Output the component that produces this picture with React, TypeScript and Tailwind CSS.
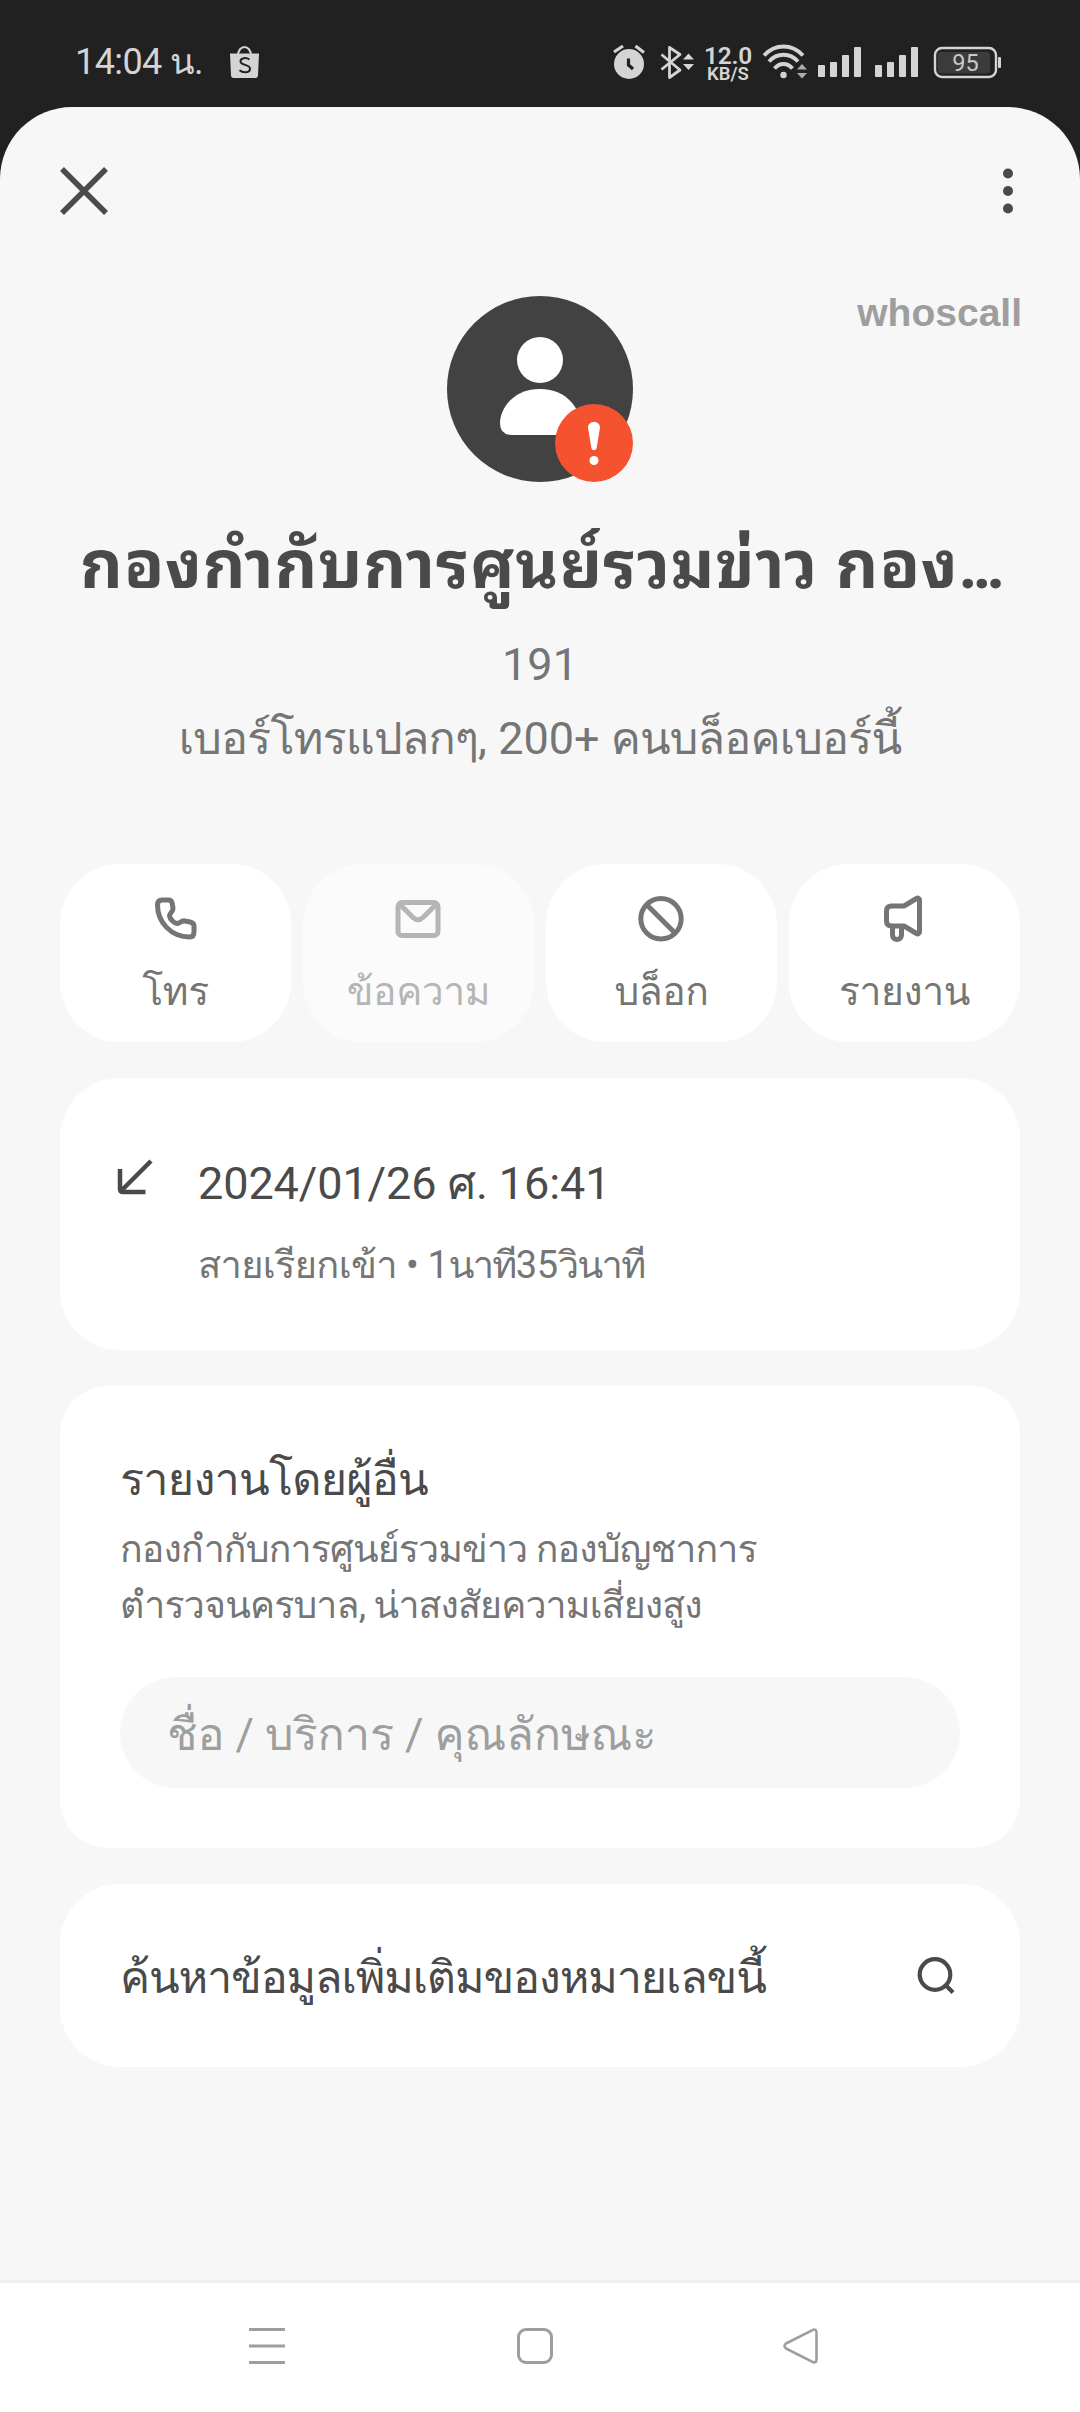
import type { ReactNode } from "react";

function StatusBar() {
  return (
    <div className="flex h-[107px] items-center justify-between bg-[#212121] pt-[17px] pr-[78px] pl-[75px] text-[#d4d4d4]">
      <div className="flex items-center gap-[26px]">
        <span className="text-[36px] leading-[42px] tracking-[-0.6px]">14:04 น.</span>
        <svg width="32" height="36" viewBox="0 0 32 36">
          <path d="M9 12C9 0 22 0 22 12" fill="none" stroke="currentColor" strokeWidth="2" />
          <path d="M1 9.5h29l-1 22q-.2 2.5-2.5 2.5h-22q-2.3 0-2.5-2.5z" fill="currentColor" />
          <path
            d="M20.5 15.5c-3-2.2-9-2-9 1.7 0 4.5 9.5 2.8 9.5 7.5 0 4.3-7 4.5-10.5 1.5"
            fill="none"
            stroke="#212121"
            strokeWidth="2"
          />
        </svg>
      </div>
      <div className="flex items-center">
        <svg width="36" height="40" viewBox="612 42 36 40" fill="none" stroke="currentColor" strokeWidth="3.2">
          <circle cx="629" cy="64" r="15" fill="currentColor" stroke="none" />
          <path d="M614 52l9-6M635.5 46l8.5 6.5" />
          <path d="M628.5 58.5v6.5l4.5 4" stroke="#212121" />
        </svg>
        <svg className="ml-3" width="36" height="40" viewBox="660 42 36 40">
          <path
            d="M661.5 54.5l18.5 15.5-10.5 7.5V47.5L680 54.5 661.5 69.5"
            fill="none"
            stroke="currentColor"
            strokeWidth="2.8"
            strokeLinejoin="round"
          />
          <path d="M683 59.5l5.5-6 5.5 6zM683 64l5.5 6 5.5-6z" fill="currentColor" />
        </svg>
        <div className="ml-[8px] flex w-[48px] flex-col items-center pt-[4px]">
          <span className="text-[24.5px] leading-[19px] font-semibold tracking-[-0.2px]">12.0</span>
          <span className="text-[18.5px] leading-[18px] font-semibold">KB/S</span>
        </div>
        <svg className="ml-[9px]" width="48" height="40" viewBox="761 42 48 40">
          <g fill="none" stroke="currentColor" strokeWidth="3.8">
            <path d="M764 55.5c11-12 28-12 39 0M769 61.5c8-9 21-9 29 0M774.5 68.5c5-6 13-6 18 0" />
          </g>
          <circle cx="783.5" cy="75" r="3.2" fill="currentColor" />
          <path d="M797 69.5l5-5.5 5 5.5zM797 73l5 5.5 5-5.5z" fill="#acacac" />
        </svg>
        <Signal />
        <Signal />
        <svg className="ml-[9px]" width="70" height="40" viewBox="932 42 70 40">
          <rect x="935" y="48" width="61" height="29" rx="7" fill="none" stroke="currentColor" strokeWidth="2.4" />
          <rect x="937.5" y="52" width="52.5" height="21.5" rx="3" fill="#3b3b3b" />
          <rect x="998" y="57" width="3" height="11" rx="1" fill="currentColor" />
          <text x="965.5" y="71" textAnchor="middle" fontSize="23.5" fill="#c8c8c8">
            95
          </text>
        </svg>
      </div>
    </div>
  );
}

function Signal() {
  return (
    <svg className="ml-[9px]" width="48" height="40" viewBox="0 0 48 40" fill="currentColor">
      <rect x="0" y="23" width="7" height="12" rx="1" />
      <rect x="12" y="20" width="7" height="15" rx="1" />
      <rect x="24" y="13" width="7" height="22" rx="1" />
      <rect x="36" y="5" width="7" height="30" rx="1" />
    </svg>
  );
}

function Avatar() {
  return (
    <svg width="186" height="186" viewBox="0 0 186 186">
      <circle cx="93" cy="93" r="93" fill="#424242" />
      <circle cx="93" cy="64" r="23" fill="#fff" />
      <path d="M93 93C65 93 53 114 53 127Q53 139 65 139H121Q133 139 133 127C133 114 121 93 93 93Z" fill="#fff" />
      <circle cx="147" cy="147" r="39" fill="#f55330" />
      <path d="M141 131.5C141 124 153 124 153 131.5L149.7 151.5C149.3 155 144.7 155 144.3 151.5Z" fill="#fff" />
      <circle cx="147" cy="164.5" r="4.5" fill="#fff" />
    </svg>
  );
}

function Action({ label, disabled, children }: { label: string; disabled?: boolean; children: ReactNode }) {
  return (
    <button
      disabled={disabled}
      className="flex h-[178px] flex-col items-center rounded-[60px] bg-white pt-7 text-[#757575] disabled:opacity-50"
    >
      <svg
        width="54"
        height="54"
        viewBox="0 0 54 54"
        fill="none"
        stroke="currentColor"
        strokeWidth="5"
        strokeLinejoin="round"
      >
        {children}
      </svg>
      <span className="mt-[21px] text-[39px] leading-[50px] tracking-[-0.01em]">{label}</span>
    </button>
  );
}

export default function App() {
  return (
    <div className="flex h-[2412px] w-[1080px] flex-col bg-[#212121] font-[Roboto,Loma,'Noto_Sans_Thai',sans-serif] text-[#4a4a4a]">
      <StatusBar />
      <main className="flex flex-1 flex-col rounded-t-[72px] bg-[#f7f7f7] px-[60px]">
        <header className="flex h-[168px] items-center justify-between">
          <svg width="48" height="48" viewBox="0 0 48 48" stroke="currentColor" strokeWidth="5.5">
            <path d="M2 2l44 44M46 2L2 46" />
          </svg>
          <svg className="mr-[7px]" width="10" height="46" viewBox="0 0 10 46" fill="currentColor">
            <circle cx="5" cy="5.5" r="5" />
            <circle cx="5" cy="23" r="5" />
            <circle cx="5" cy="40.5" r="5" />
          </svg>
        </header>

        <div className="grid grid-cols-[1fr_186px_1fr] pt-[21px]">
          <div />
          <Avatar />
          <span className="-mr-0.5 justify-self-end font-['Liberation_Sans',sans-serif] text-[39px] leading-[34px] font-bold text-[#9e9e9e]">
            whoscall
          </span>
        </div>
        <h1 className="mt-[39px] text-center font-[Roboto,'Noto_Sans_Thai_Looped',Loma,sans-serif] text-[66px] leading-[90px] font-bold tracking-[0.014em] whitespace-nowrap">
          กองกำกับการศูนย์รวมข่าว กอง<span className="tracking-[-0.08em]">...</span>
        </h1>
        <p className="mt-[24px] text-center text-[45px] leading-[60px] text-[#757575]">191</p>
        <p className="mt-[14px] text-center text-[45px] leading-[60px] tracking-[-0.019em] whitespace-nowrap text-[#757575]">
          เบอร์โทรแปลกๆ<span className="tracking-normal">, 200+ </span>คนบล็อคเบอร์นี้
        </p>

        <div className="mt-[95px] grid grid-cols-4 gap-3">
          <Action label="โทร">
            <path d="M13 8H19C21.5 8 23 9.5 23.2 11.5L24 16C24.5 20 20 21.5 20.5 24C21 27 25 31 28 31.5C31 32 32 28 36 29L41 30C43.5 30.6 45 32 45 34V40C45 43 43.5 45 40.5 45C22 45 8.5 30 8.5 13C8.5 10 10 8 13 8Z" />
          </Action>
          <Action label="ข้อความ" disabled>
            <rect x="6" y="10.5" width="40" height="33" rx="4" />
            <path d="M7.5 12L21 25.5Q26 30 31 25.5L44.5 12" />
          </Action>
          <Action label="บล็อก">
            <circle cx="26" cy="26.7" r="20.2" />
            <path d="M12 13l28 28" />
          </Action>
          <Action label="รายงาน">
            <path d="M13 14H26L38.5 6.5C40 5.5 41.5 6.5 41.5 8V40C41.5 41.5 40 42.5 38.5 41.5L26 34H13Q8.5 33.5 8.5 29V19Q8.5 14.5 13 14ZM14.5 34V43C14.5 49 23.5 49 23.5 43V34" />
          </Action>
        </div>

        <section className="mt-9 flex h-[272px] rounded-[60px] bg-white pt-[76px] pl-[54px]">
          <svg className="mt-[2px]" width="42" height="42" viewBox="0 0 42 42" fill="none" stroke="currentColor" strokeWidth="4.5">
            <path d="M37 5L7 35M6 13V33Q6 36 9 36H31.5" />
          </svg>
          <div className="ml-[42px]">
            <p className="text-[45px] leading-[60px] tracking-[-0.1px]">2024/01/26 ศ. 16:41</p>
            <p className="mt-[26px] text-[38px] leading-[50px] tracking-[-0.045em] text-[#757575]">
              <span className="tracking-[-0.018em]">สายเรียกเข้า</span>
              <span className="tracking-[-0.01em]"> • 1</span>นาที<span className="tracking-[-0.01em]">35</span>วินาที
            </p>
          </div>
        </section>

        <section className="mt-9 h-[462px] rounded-[48px] bg-white px-[60px] pt-16">
          <h2 className="text-[45px] leading-[60px] tracking-[-0.018em]">รายงานโดยผู้อื่น</h2>
          <p className="mt-[11px] text-[37.5px] leading-[56px] tracking-[-0.023em] whitespace-nowrap text-[#757575]">
            กองกำกับการศูนย์รวมข่าว กองบัญชาการ
            <br />
            ตำรวจนครบาล, น่าสงสัยความเสี่ยงสูง
          </p>
          <div className="mt-11 h-[111px] rounded-full bg-[#f7f7f7] px-[47px] pt-7 text-[45px] leading-[60px] tracking-[-0.002em] text-[#9e9e9e]">
            ชื่อ / บริการ / คุณลักษณะ
          </div>
        </section>

        <section className="mt-9 flex h-[183px] items-center justify-between rounded-[60px] bg-white px-[60px] pt-1">
          <span className="text-[45px] leading-[60px] tracking-[-0.026em]">ค้นหาข้อมูลเพิ่มเติมของหมายเลขนี้</span>
          <svg width="48" height="48" viewBox="0 0 48 48" fill="none" stroke="currentColor" strokeWidth="4.2">
            <circle cx="23" cy="20.5" r="15.3" />
            <path d="M33.5 31l7.5 7.5" />
          </svg>
        </section>
      </main>

      <nav className="flex h-[132px] items-start gap-[232px] border-t-[3px] border-[#efefef] bg-white pt-[44px] pl-[249px]">
        <svg width="36" height="38" viewBox="0 0 36 38" stroke="#9e9e9e" strokeWidth="3">
          <path d="M0 2.5h36M0 19h36M0 35.5h36" />
        </svg>
        <svg width="36" height="38" viewBox="0 0 36 38" fill="none" stroke="#9e9e9e" strokeWidth="3">
          <rect x="1.5" y="2.5" width="33" height="33" rx="7.5" />
        </svg>
        <svg className="-ml-0.5" width="36" height="38" viewBox="0 0 36 38" fill="none" stroke="#9e9e9e" strokeWidth="2.6" strokeLinejoin="round">
          <path d="M30 2.8L3 16.5Q0 19 3 21.5L30 35.2Q33.5 36 33.5 32.5V5.5Q33.5 2 30 2.8Z" />
        </svg>
      </nav>
    </div>
  );
}
